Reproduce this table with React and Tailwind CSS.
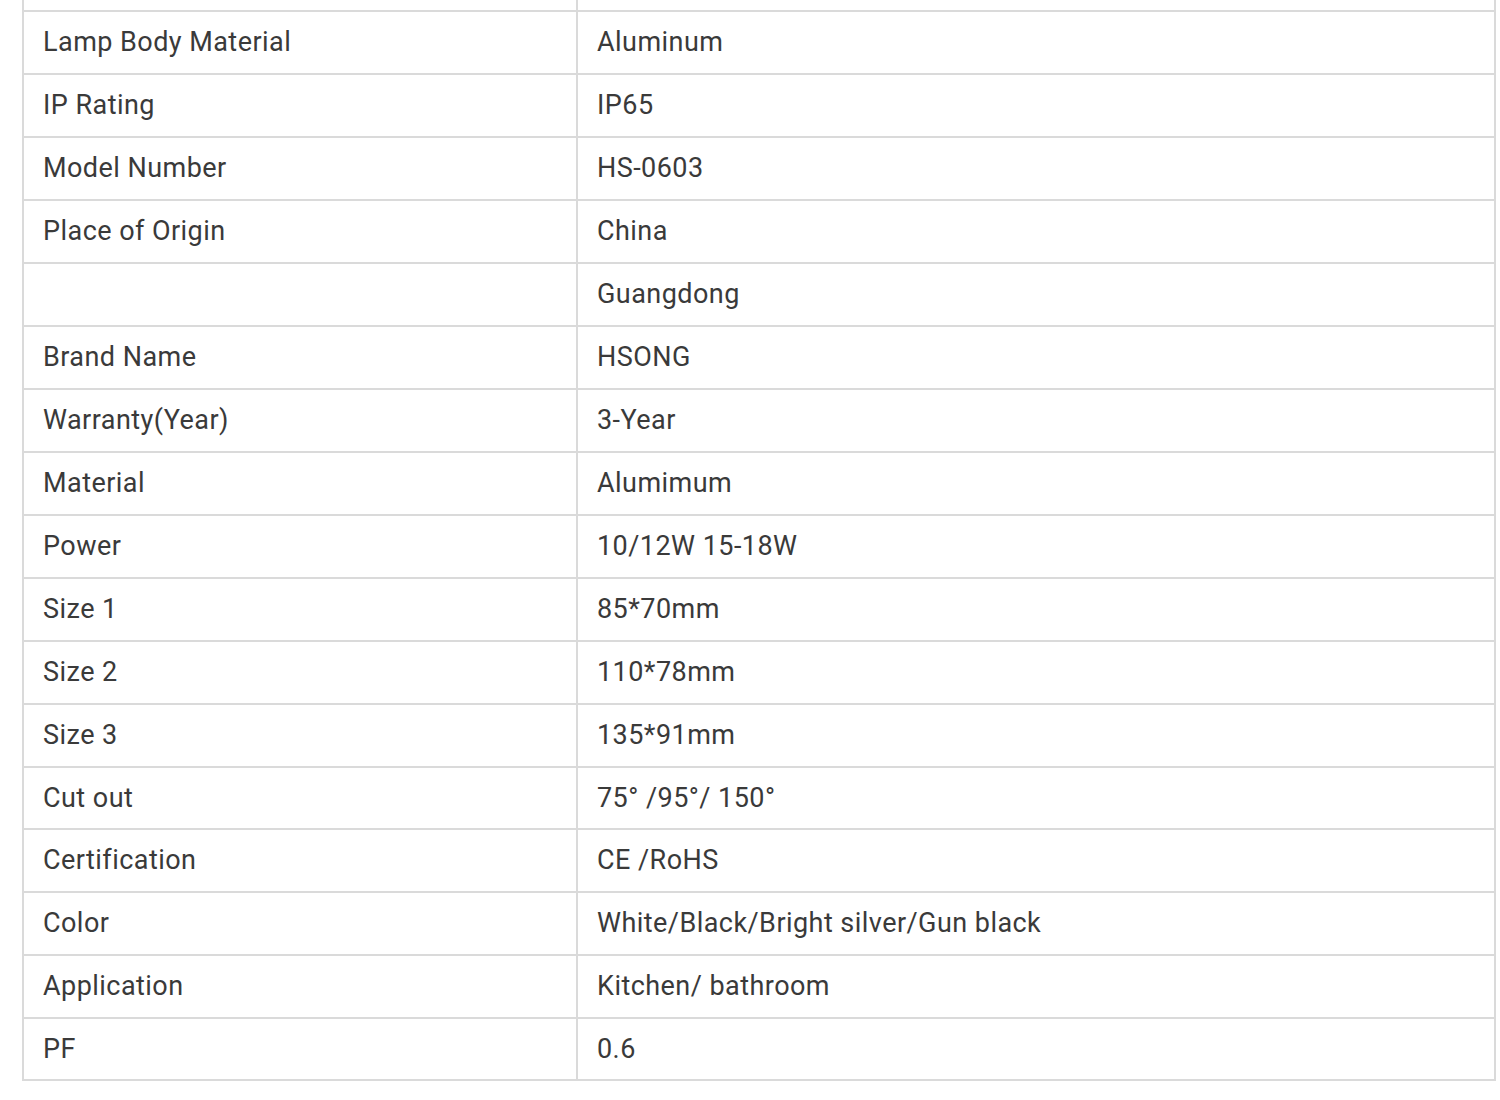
const ROWS = [
  ['Lamp Body Material', 'Aluminum'],
  ['IP Rating', 'IP65'],
  ['Model Number', 'HS-0603'],
  ['Place of Origin', 'China'],
  ['', 'Guangdong'],
  ['Brand Name', 'HSONG'],
  ['Warranty(Year)', '3-Year'],
  ['Material', 'Alumimum'],
  ['Power', '10/12W 15-18W'],
  ['Size 1', '85*70mm'],
  ['Size 2', '110*78mm'],
  ['Size 3', '135*91mm'],
  ['Cut out', '75° /95°/ 150°'],
  ['Certification', 'CE /RoHS'],
  ['Color', 'White/Black/Bright silver/Gun black'],
  ['Application', 'Kitchen/ bathroom'],
  ['PF', '0.6'],
]

export default function App() {
  return (
    <div className="w-[1500px] h-[1100px] bg-white pl-[22px] font-['Roboto',sans-serif] text-[27px] tracking-[0.45px] text-[#3a3a3a] overflow-hidden">
      <div className="w-[1474px] border-x-2 border-b-2 border-[#dadada]">
        <div className="grid grid-cols-[554px_1fr] h-[10px]">
          <div className="border-r-2 border-[#dadada]" />
          <div />
        </div>
        {ROWS.map(([label, value], i) => (
          <div
            key={i}
            className={`grid grid-cols-[554px_1fr] border-t-2 border-[#dadada] ${i === 12 || i === 16 ? 'h-[62px]' : 'h-[63px]'}`}
          >
            <div className="flex items-center pl-[19px] border-r-2 border-[#dadada]">{label}</div>
            <div className="flex items-center pl-[19px]">{value}</div>
          </div>
        ))}
      </div>
    </div>
  )
}
